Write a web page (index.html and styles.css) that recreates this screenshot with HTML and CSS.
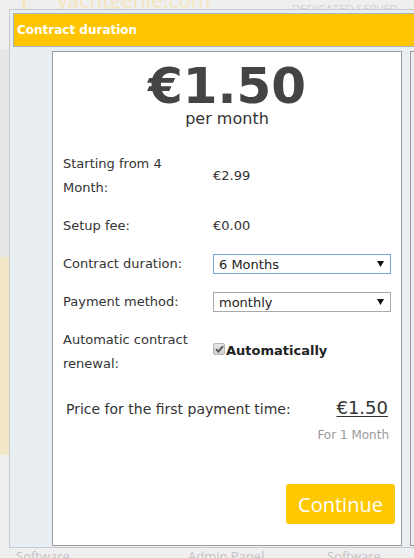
FILE: index.html
```html
<!DOCTYPE html>
<html lang="en">
<head>
<meta charset="utf-8">
<title>Contract duration</title>
<link rel="stylesheet" href="styles.css">
</head>
<body>
<div class="site">
  <header class="site-top">
    <div class="logo"><span class="logo-mark"></span><span class="logo-text">yachtgenie.com</span></div>
    <nav class="top-nav">DEDICATED SERVER</nav>
  </header>
  <div class="site-mid">
    <aside class="side"><div class="side-gray"></div><div class="side-yellow"></div></aside>
  </div>
  <footer class="site-foot"><span>Software</span><span>Admin Panel</span><span>Software</span></footer>
</div>

<div class="modal">
  <div class="modal-head">Contract duration</div>
  <div class="modal-body">
    <section class="panel">
      <div class="price-big">€1.50</div>
      <div class="price-unit">per month</div>
      <div class="rows">
        <div class="row"><div class="label">Starting from 4 Month:</div><div class="value">€2.99</div></div>
        <div class="row"><div class="label">Setup fee:</div><div class="value">€0.00</div></div>
        <div class="row"><div class="label">Contract duration:</div>
          <div class="value"><span class="select-wrap"><select class="select select-focus"><option>6 Months</option></select><svg class="select-arrow" width="7" height="6" viewBox="0 0 7 6"><path d="M0 0H7L3.5 6Z" fill="#111"/></svg></span></div></div>
        <div class="row"><div class="label">Payment method:</div>
          <div class="value"><span class="select-wrap"><select class="select"><option>monthly</option></select><svg class="select-arrow" width="7" height="6" viewBox="0 0 7 6"><path d="M0 0H7L3.5 6Z" fill="#111"/></svg></span></div></div>
        <div class="row"><div class="label">Automatic contract renewal:</div>
          <div class="value value-check"><label class="check-label"><span class="check"><svg width="9" height="8" viewBox="0 0 9 8"><path d="M1 4.2L3.4 6.6L8 1.2" fill="none" stroke="#555" stroke-width="1.8"/></svg></span><b>Automatically</b></label></div></div>
      </div>
      <div class="first-pay"><span class="first-label">Price for the first payment time:</span><span class="first-value">€1.50</span></div>
      <div class="first-note">For 1 Month</div>
      <button class="btn" type="button">Continue</button>
    </section>
    <section class="panel panel-next"></section>
  </div>
</div>
</body>
</html>
```
FILE: styles.css
```css
* { box-sizing: border-box; }
html, body { margin: 0; }
body {
  width: 414px;
  height: 558px;
  overflow: hidden;
  background: #efefef;
  font-family: "DejaVu Sans", Verdana, sans-serif;
  position: relative;
}

.site-top { height: 49px; display: flex; }
.logo {
  display: flex;
  align-items: flex-start;
  gap: 12px;
  margin-left: 22px;
  margin-top: -10px;
  color: #f4e6bd;
}
.logo-mark {
  width: 23px;
  height: 23px;
  border: 3px solid #f4e6bd;
  border-right-color: transparent;
  border-radius: 50%;
  margin-top: 2px;
}
.logo-text { font-family: "Open Sans", sans-serif; font-size: 21px; line-height: 21px; }
.top-nav {
  margin-left: auto;
  margin-right: 17px;
  margin-top: 2px;
  font-family: "Open Sans", sans-serif;
  font-size: 11.5px;
  line-height: 14px;
  color: #d2d2d2;
}

.site-mid { height: 498px; display: flex; }
.side { width: 9px; display: flex; flex-direction: column; }
.side-gray { height: 208px; background: #e6e6e6; }
.side-yellow { height: 198px; background: #f1e7c7; }

.site-foot {
  display: grid;
  grid-template-columns: 172px 139px auto;
  padding-left: 16px;
  font-family: "Open Sans", sans-serif;
  font-size: 13px;
  line-height: 18px;
  color: #c4c4c4;
}

.modal {
  position: absolute;
  left: 9px;
  top: 9px;
  width: 405px;
  height: 539px;
  overflow: hidden;
  border: 1px solid #c6cacf;
  border-right: none;
  background: #e9eef2;
  padding: 3px 0 0 3px;
}
.modal-head {
  height: 34px;
  border: 1px solid #a9b1b9;
  border-right: none;
  background: #ffc500;
  color: #fff;
  font-weight: bold;
  font-size: 12px;
  display: flex;
  align-items: center;
  padding-left: 3px;
}
.modal-body {
  display: flex;
  gap: 8px;
  margin-top: 4px;
  padding-left: 39px;
}
.panel {
  flex: none;
  width: 350px;
  height: 495px;
  border: 1px solid #9c9c9c;
  background: #fff;
  display: flex;
  flex-direction: column;
  padding-top: 14px;
  color: #333;
}
.panel-next { width: 60px; background: #e9eef2; }

.price-big {
  text-align: center;
  font-size: 50px;
  line-height: 40px;
  font-weight: bold;
  color: #444;
}
.price-unit {
  text-align: center;
  font-size: 16px;
  line-height: 18px;
  margin-top: 4px;
}

.rows {
  margin-top: 24px;
  padding: 0 10px;
  display: flex;
  flex-direction: column;
  gap: 14px;
}
.row {
  display: grid;
  grid-template-columns: 140px 1fr;
  column-gap: 10px;
  align-items: center;
  font-size: 13px;
  line-height: 24px;
}
.select-wrap { position: relative; display: block; height: 20px; }
.select {
  appearance: none;
  -webkit-appearance: none;
  display: block;
  width: 100%;
  height: 20px;
  border: 1px solid #a9a9a9;
  border-radius: 0;
  background: #fff;
  font-family: "DejaVu Sans", Verdana, sans-serif;
  font-size: 13px;
  color: #222;
  padding: 0 0 0 5px;
  margin: 0;
  outline: none;
}
.select-focus { border-color: #7ba3de; }
.select-arrow { position: absolute; right: 7px; top: 7px; }

.value-check { margin-bottom: 4px; }
.check-label { display: inline-flex; align-items: center; gap: 1px; color: #222; }
.check {
  width: 12px;
  height: 12px;
  border: 1px solid #b5b5b5;
  border-radius: 2px;
  background: linear-gradient(#e8e8e8, #d2d2d2);
  display: inline-flex;
  align-items: center;
  justify-content: center;
  margin-top: -5px;
}

.first-pay {
  margin-top: 20px;
  padding: 0 13px 0 13px;
  display: flex;
  justify-content: space-between;
  align-items: baseline;
  line-height: 24px;
}
.first-label { font-size: 14px; }
.first-value { font-size: 18px; text-decoration: underline; text-underline-offset: 2px; }
.first-note {
  text-align: right;
  padding-right: 12px;
  margin-top: 6px;
  font-size: 12px;
  line-height: 16px;
  color: #999;
}

.btn {
  margin-top: auto;
  margin-bottom: 21px;
  margin-right: 6px;
  align-self: flex-end;
  width: 109px;
  height: 40px;
  border: none;
  border-radius: 3px;
  background: #ffc800;
  color: #fff;
  font-family: "Open Sans", sans-serif;
  font-size: 20px;
  padding: 0;
}
```
